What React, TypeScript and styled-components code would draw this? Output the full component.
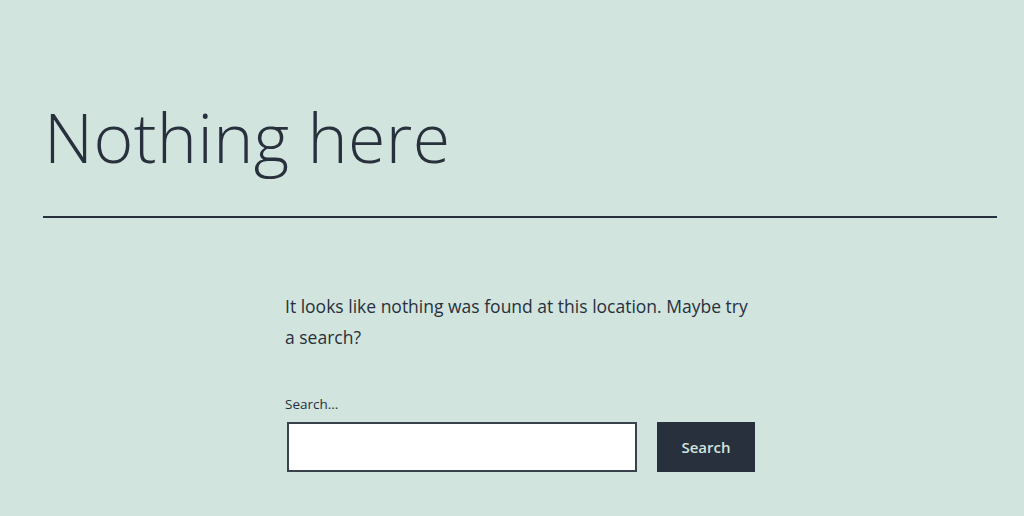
import styled, { createGlobalStyle } from 'styled-components'

const GlobalStyle = createGlobalStyle`
  html, body {
    margin: 0;
    padding: 0;
    background: #d1e4dd;
  }
  body {
    color: #28303d;
    font-family: 'Open Sans', 'Noto Sans', sans-serif;
  }
`

const Page = styled.main`
  min-height: 516px;
  padding: 0 27px 0 43px;
  box-sizing: border-box;
`

const PageHeader = styled.header`
  padding-top: 96px;
  padding-bottom: 38px;
  border-bottom: 2px solid #28303d;
`

const Title = styled.h1`
  margin: 0;
  padding-left: 1px;
  font-size: 68px;
  font-weight: 300;
  line-height: 1.2;
  letter-spacing: 0.4px;
`

const Content = styled.section`
  padding-left: 242px;
  padding-top: 73px;
  width: 480px;
`

const Intro = styled.p`
  margin: 0 0 42px;
  max-width: 470px;
  font-size: 17.5px;
  line-height: 31px;
`

const Label = styled.label`
  display: block;
  font-size: 13.5px;
  font-weight: 500;
  margin-bottom: 9px;
`

const SearchRow = styled.form`
  display: flex;
  gap: 20px;
  padding-left: 2px;
`

const Input = styled.input`
  width: 350px;
  height: 50px;
  box-sizing: border-box;
  border: 2px solid #39414d;
  background: #fff;
  margin: 0;
`

const Button = styled.button`
  width: 98px;
  height: 50px;
  border: none;
  margin: 0;
  background: #28303d;
  color: #d1e4dd;
  font-family: inherit;
  font-size: 15px;
  font-weight: 600;
`

export default function App() {
  return (
    <>
      <GlobalStyle />
      <Page>
        <PageHeader>
          <Title>Nothing here</Title>
        </PageHeader>
        <Content>
          <Intro>
            It looks like nothing was found at this location. Maybe try a search?
          </Intro>
          <Label htmlFor="s">Search...</Label>
          <SearchRow onSubmit={(e) => e.preventDefault()}>
            <Input id="s" type="search" />
            <Button type="submit">Search</Button>
          </SearchRow>
        </Content>
      </Page>
    </>
  )
}
